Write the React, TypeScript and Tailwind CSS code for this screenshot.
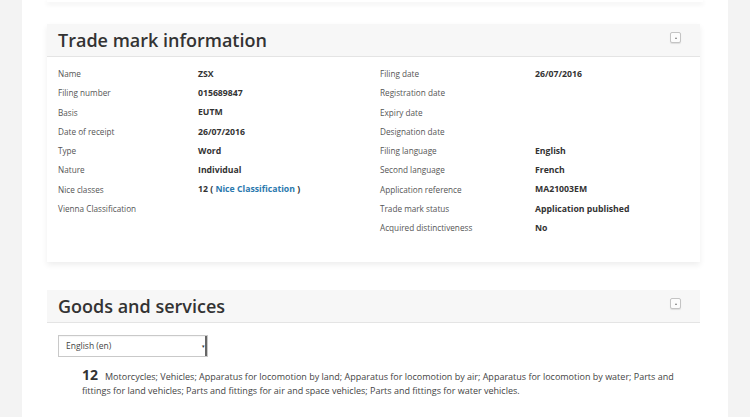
import React from "react";

const left: Array<[string, React.ReactNode]> = [
  ["Name", "ZSX"],
  ["Filing number", "015689847"],
  ["Basis", "EUTM"],
  ["Date of receipt", "26/07/2016"],
  ["Type", "Word"],
  ["Nature", "Individual"],
  [
    "Nice classes",
    <>
      12 ( <span className="text-[#2a79ae]">Nice Classification</span> )
    </>,
  ],
  ["Vienna Classification", ""],
];

const right: Array<[string, string]> = [
  ["Filing date", "26/07/2016"],
  ["Registration date", ""],
  ["Expiry date", ""],
  ["Designation date", ""],
  ["Filing language", "English"],
  ["Second language", "French"],
  ["Application reference", "MA21003EM"],
  ["Trade mark status", "Application published"],
  ["Acquired distinctiveness", "No"],
];

function CollapseButton() {
  return (
    <div className="flex h-[11px] w-[11px] items-center justify-center rounded-[2px] border border-[#c4c4c4] bg-[#fcfcfc] shadow-[0_1px_1px_rgba(0,0,0,0.1)]">
      <div className="h-0 w-0 border-x-[1.5px] border-b-[2px] border-x-transparent border-b-[#777]" />
    </div>
  );
}

function PanelHeader({ title }: { title: string }) {
  return (
    <div className="flex h-[33px] items-start justify-between border-b border-[#e4e4e4] bg-[#f7f7f7] pl-[11px] pr-[19px]">
      <h2 className="mt-[4px] text-[18px] font-semibold leading-[24px] text-[#333]">{title}</h2>
      <div className="mt-[8px]">
        <CollapseButton />
      </div>
    </div>
  );
}

function Rows({ rows, labelW }: { rows: Array<[string, React.ReactNode]>; labelW: string }) {
  return (
    <div className="flex flex-col">
      {rows.map(([label, value]) => (
        <div key={label} className="flex h-[19.3px] items-center pt-[1px]">
          <div className={`${labelW} shrink-0 text-[8.2px] text-[#555]`}>{label}</div>
          <div className="text-[8.7px] font-bold text-[#333]">{value}</div>
        </div>
      ))}
    </div>
  );
}

export default function App() {
  return (
    <div
      className="h-[417px] w-[750px] overflow-hidden bg-[#f3f3f3]"
      style={{ fontFamily: '"Open Sans", "Noto Sans", sans-serif' }}
    >
      <div className="ml-[22px] h-full w-[706px] bg-white">
        <div className="mx-[25px] h-[2px] shadow-[0_2px_5px_rgba(0,0,0,0.1)]" />

        <section className="mx-[25px] mt-[22px] w-[653px] bg-white shadow-[0_3px_6px_rgba(0,0,0,0.07)]">
          <PanelHeader title="Trade mark information" />
          <div className="flex h-[205px] pl-[11px] pt-[7px]">
            <div className="w-[322px]">
              <Rows rows={left} labelW="w-[140px]" />
            </div>
            <Rows rows={right} labelW="w-[155px]" />
          </div>
        </section>

        <section className="mx-[25px] mt-[28px] w-[653px] bg-white">
          <PanelHeader title="Goods and services" />
          <div className="pl-[11px] pt-[12px]">
            <div className="flex h-[22px] w-[150px] items-center border border-[#c9c9c9] bg-white shadow-[inset_0_1px_1px_rgba(0,0,0,0.04)]">
              <span className="flex-1 pl-[7px] text-[8.5px] text-[#444]">English (en)</span>
              <div className="flex h-full w-[6px] items-center justify-center border-r-2 border-[#666] text-[5px] leading-none text-[#333]">
                ▾
              </div>
            </div>
            <p className="mt-[11px] w-[636px] pl-[24px] text-[9px] leading-[14px] text-[#444]">
              <span className="mr-[7px] text-[14px] font-bold leading-none text-[#333]">12</span>
              Motorcycles; Vehicles; Apparatus for locomotion by land; Apparatus for locomotion by air; Apparatus for
              locomotion by water; Parts and fittings for land vehicles; Parts and fittings for air and space vehicles;
              Parts and fittings for water vehicles.
            </p>
          </div>
        </section>
      </div>
    </div>
  );
}
